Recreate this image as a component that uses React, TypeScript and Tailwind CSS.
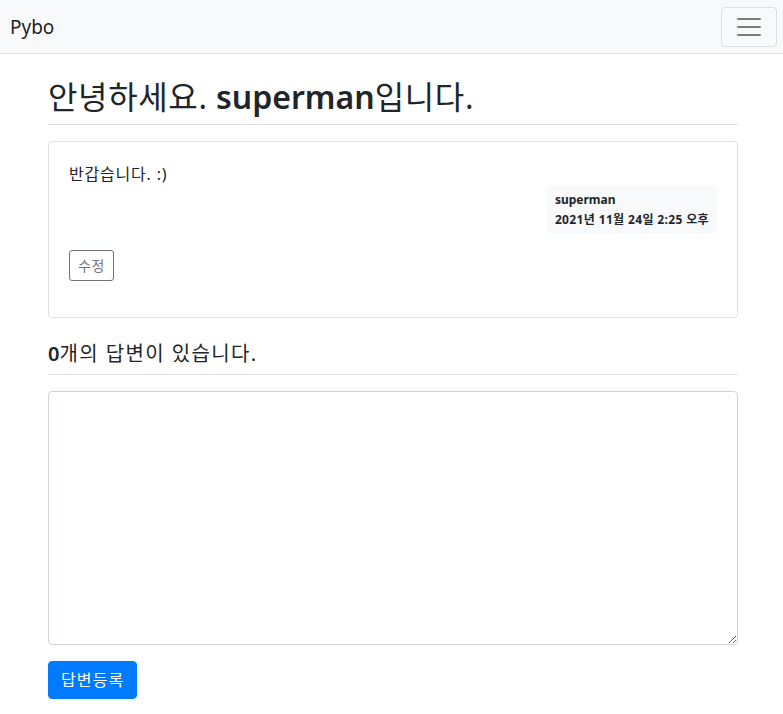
export default function App() {
  const font = { fontFamily: '"Noto Sans", "Noto Sans CJK KR", sans-serif' };
  return (
    <div className="min-h-[714px] bg-white text-[#212529]" style={font}>
      <nav className="flex h-[54px] items-center justify-between border-b border-[#dee2e6] bg-[#f8f9fa] pl-[10px] pr-[6px]">
        <a className="text-[19px] leading-[30px] text-[rgba(0,0,0,0.9)]">Pybo</a>
        <button className="flex h-[40px] w-[56px] items-center justify-center rounded-[4px] border border-[rgba(0,0,0,0.1)]">
          <svg width="30" height="30" viewBox="0 0 30 30">
            <path d="M4 7h22M4 15h22M4 23h22" stroke="rgba(0,0,0,0.5)" strokeWidth="2" strokeLinecap="round" />
          </svg>
        </button>
      </nav>
      <div className="ml-[48px] w-[690px] pt-[16px]">
        <h2 className="border-b border-[#dee2e6] py-[8px] text-[32px] font-normal leading-[38px]">
          <span className="tracking-[0.02em]">안녕하세요.</span> <b className="font-semibold">superman</b>
          <span className="tracking-[0.02em]">입니다.</span>
        </h2>
        <div className="mt-[16px] rounded-[4px] border border-[rgba(0,0,0,0.125)] p-[20px]">
          <div className="whitespace-pre-line text-[16px] leading-[24px] tracking-[0.05em]">반갑습니다. :)</div>
          <div className="flex justify-end">
            <div className="rounded-[4px] bg-[#f8f9fa] p-[8px] text-left text-[12px] font-bold leading-[12px]">
              <div className="mb-[8px]">superman</div>
              <div className="tracking-[0.03em]">2021년 11월 24일 2:25 오후</div>
            </div>
          </div>
          <div className="my-[16px]">
            <a className="inline-block rounded-[3px] border border-[#6c757d] px-[8px] py-[4px] text-[14px] leading-[21px] tracking-[0.05em] text-[#6c757d]">수정</a>
          </div>
        </div>
        <h5 className="mt-[16px] border-b border-[#dee2e6] py-[8px] text-[20px] font-normal leading-[24px]">
          <b className="font-semibold">0</b>
          <span className="tracking-[0.07em]">개의 답변이 있습니다.</span>
        </h5>
        <form className="mt-[16px]">
          <textarea
            rows={10}
            className="block h-[254px] w-full rounded-[4px] border border-[#ced4da] px-[12px] py-[6px] text-[16px] leading-[24px]"
          />
          <button
            type="button"
            className="mt-[16px] rounded-[4px] border border-[#007bff] bg-[#007bff] px-[12px] py-[6px] text-[16px] leading-[24px] tracking-[0.07em] text-white"
          >
            답변등록
          </button>
        </form>
      </div>
    </div>
  );
}
